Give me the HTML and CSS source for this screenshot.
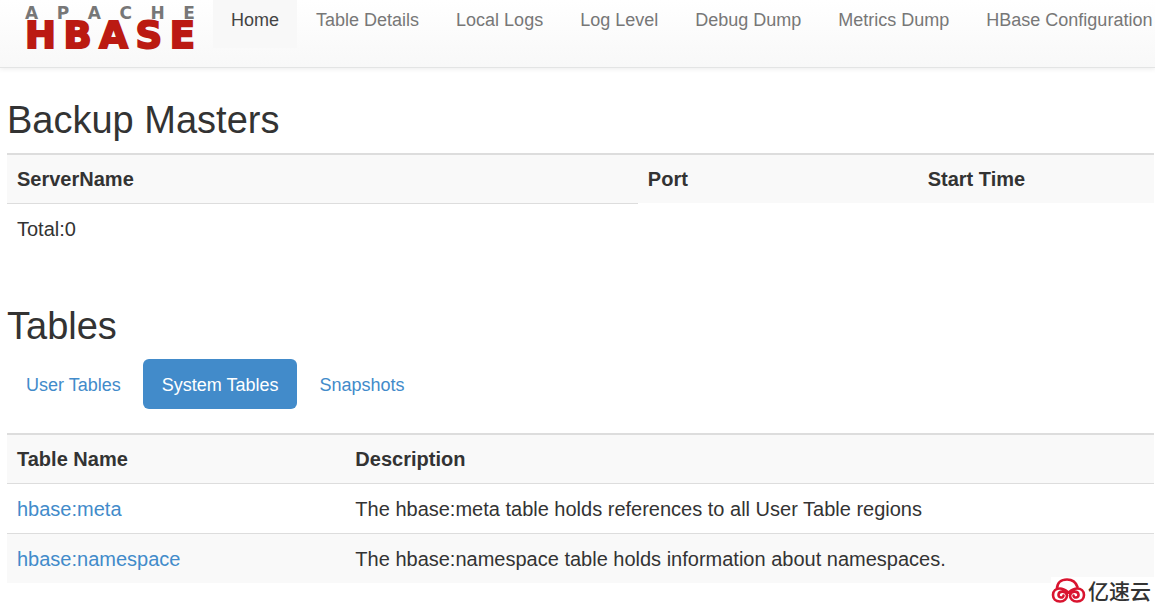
FILE: index.html
```html
<!DOCTYPE html>
<html lang="en">
<head>
<meta charset="utf-8">
<title>HBase Master</title>
<link rel="stylesheet" href="styles.css">
</head>
<body>
<header class="navbar">
  <a class="brand" href="#" aria-label="Apache HBase">
    <span class="brand-top"><span>A</span><span>P</span><span>A</span><span>C</span><span>H</span><span>E</span></span>
    <span class="brand-main"><span>H</span><span>B</span><span>A</span><span>S</span><span>E</span></span>
  </a>
  <nav class="nav">
    <a class="nav-link active" href="#">Home</a>
    <a class="nav-link" href="#">Table Details</a>
    <a class="nav-link" href="#">Local Logs</a>
    <a class="nav-link" href="#">Log Level</a>
    <a class="nav-link" href="#">Debug Dump</a>
    <a class="nav-link" href="#">Metrics Dump</a>
    <a class="nav-link" href="#">HBase Configuration</a>
  </nav>
</header>
<main class="content">
  <section class="section">
    <h2 class="title">Backup Masters</h2>
    <table class="table">
      <colgroup><col class="col-server"><col class="col-port"><col></colgroup>
      <thead><tr><th>ServerName</th><th>Port</th><th>Start Time</th></tr></thead>
      <tbody><tr><td>Total:0</td></tr></tbody>
    </table>
  </section>
  <section class="section">
    <h2 class="title">Tables</h2>
    <div class="pills">
      <a class="pill" href="#">User Tables</a>
      <a class="pill active" href="#">System Tables</a>
      <a class="pill" href="#">Snapshots</a>
    </div>
    <table class="table">
      <colgroup><col class="col-name"><col></colgroup>
      <thead><tr><th>Table Name</th><th>Description</th></tr></thead>
      <tbody>
        <tr><td><a href="#">hbase:meta</a></td><td>The hbase:meta table holds references to all User Table regions</td></tr>
        <tr class="striped"><td><a href="#">hbase:namespace</a></td><td>The hbase:namespace table holds information about namespaces.</td></tr>
      </tbody>
    </table>
  </section>
</main>
<div class="watermark">
  <svg width="35" height="26" viewBox="0 0 35 26" fill="none" stroke="#d9142f" stroke-width="2.6" stroke-linecap="round" aria-hidden="true">
    <path d="M6 12C6 6 10 2.500 16 2.500c6 0 9 3 10.500 7.500"/>
    <path d="M12.500 18.500c0 3-5.500 2.500-5 -1c.5-4 8-4 8.500 1c0 3-2.500 6-7 6c-4.500 0-7-3-7-6.500c0-4 3-6.500 7-6.500c4 0 6 2 8.500 4"/>
    <path d="M22.500 18.500c0 3 5.500 2.500 5 -1c-.5-4-8-4-8.500 1c0 3 2.500 6 7 6c4.500 0 7-3 7-6.500c0-4-3-6.500-7-6.500c-4 0-6 2-8.500 4"/>
  </svg>
  <span lang="zh">亿速云</span>
</div>
</body>
</html>
```
FILE: styles.css
```css
* {
  box-sizing: border-box;
}

body {
  margin: 0;
  background: #fff;
  color: #333;
  font: 20px/28px "Liberation Sans", Arial, sans-serif;
}

a {
  color: #428bca;
  text-decoration: none;
}

.navbar {
  display: flex;
  align-items: flex-start;
  min-height: 68px;
  background: linear-gradient(#fff, #f8f8f8);
  border-bottom: 1px solid #e3e4e4;
  box-shadow: 0 1px 5px rgba(0, 0, 0, 0.08);
}

.brand {
  display: flex;
  flex-direction: column;
  flex: none;
  width: 170px;
  margin: 4px 18px 0 25px;
  font-family: "DejaVu Sans", sans-serif;
  font-weight: bold;
}

.brand-top,
.brand-main {
  display: flex;
  justify-content: space-between;
}

.brand-top {
  color: #777;
  font-size: 17px;
  line-height: 18px;
}

.brand-main {
  color: #bb1a12;
  font-size: 37px;
  line-height: 28px;
  -webkit-text-stroke: 2px #bb1a12;
}

.nav {
  display: flex;
  gap: 1px;
  white-space: nowrap;
}

.nav-link {
  padding: 6px 18px 14px;
  color: #777;
  font-size: 18px;
}

.nav-link.active {
  background: #f8f8f8;
  color: #444;
}

.content {
  padding: 30px 1px 0 7px;
}

.section + .section {
  margin-top: 51px;
}

.title {
  margin: 0 0 11px;
  font-size: 38px;
  font-weight: normal;
  line-height: 44px;
}

.table {
  width: 100%;
  border-spacing: 0;
  table-layout: fixed;
}

.table th,
.table td {
  padding: 10px;
  text-align: left;
}

.table th {
  background: #f9f9f9;
  border-top: 2px solid #ddd;
}

.table td {
  padding-top: 11px;
  border-top: 1px solid #ddd;
}

.striped td {
  background: #f9f9f9;
}

.col-server {
  width: 55%;
}

.col-port {
  width: 24.4%;
}

.col-name {
  width: 29.5%;
}

.pills {
  display: flex;
  gap: 3px;
  margin-bottom: 24px;
}

.pill {
  padding: 12px 19px 10px;
  border-radius: 6px;
  font-size: 18px;
}

.pill.active {
  background: #428bca;
  color: #fff;
}

.watermark {
  position: absolute;
  right: 0;
  bottom: 0;
  display: flex;
  align-items: center;
  gap: 2px;
  padding-right: 4px;
  background: #fff;
  color: #333;
  font: 500 21px/26px "Noto Sans CJK SC", sans-serif;
}
```
